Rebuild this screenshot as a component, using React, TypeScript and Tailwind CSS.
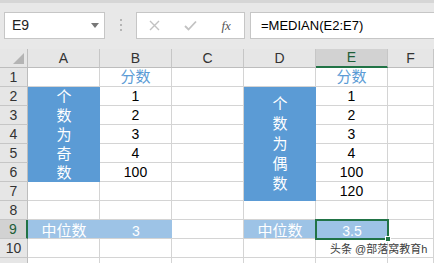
import React from 'react';

const COL = ['', 'col-start-1', 'col-start-2', 'col-start-3', 'col-start-4', 'col-start-5', 'col-start-6', 'col-start-7'];
const ROW = ['', 'row-start-1', 'row-start-2', 'row-start-3', 'row-start-4', 'row-start-5', 'row-start-6', 'row-start-7', 'row-start-8', 'row-start-9', 'row-start-10', 'row-start-11', 'row-start-12'];

const letters = ['A', 'B', 'C', 'D', 'E', 'F'];

const values: Record<string, string> = {
  B1: '分数', B2: '1', B3: '2', B4: '3', B5: '4', B6: '100',
  E1: '分数', E2: '1', E3: '2', E4: '3', E5: '4', E6: '100', E7: '120',
};

const Stack = ({ text, lh }: { text: string; lh: string }) => (
  <>
    {text.split('').map((ch, i) => (
      <span key={i} className={`text-[15px] ${lh}`}>{ch}</span>
    ))}
  </>
);

export default function App() {
  const cells: React.ReactNode[] = [];
  for (let r = 1; r <= 11; r++) {
    for (let c = 1; c <= 6; c++) {
      const key = letters[c - 1] + r;
      const v = values[key];
      const isHead = r === 1;
      cells.push(
        <div
          key={key}
          className={`${COL[c + 1]} ${ROW[r + 1]} border-r border-b border-[#d4d4d4] flex items-center justify-center ${isHead ? 'text-[15px] text-[#5b9bd5]' : 'text-[14px] text-black'}`}
        >
          {v}
        </div>
      );
    }
  }

  return (
    <div className="w-[434px] h-[263px] overflow-hidden bg-white relative font-['Liberation_Sans','Noto_Sans_CJK_SC',sans-serif]">
      {/* formula bar */}
      <div className="h-[49px] bg-[#e8e8e8] border-t-[3px] border-[#d6d6d6] flex items-start pt-[9px]">
        <div className="ml-[4px] w-[101px] h-[27px] bg-white border border-[#c6c6c6] flex items-center pl-[7px] text-[14px] text-[#222]">
          E9
          <svg className="ml-auto mr-[5px]" width="8" height="5" viewBox="0 0 8 5">
            <polygon points="0,0 8,0 4,5" fill="#777" />
          </svg>
        </div>
        <div className="ml-[15px] mt-[7px] flex flex-col gap-[3px]">
          <span className="w-[2px] h-[2px] bg-[#b5b5b5]" />
          <span className="w-[2px] h-[2px] bg-[#b5b5b5]" />
          <span className="w-[2px] h-[2px] bg-[#b5b5b5]" />
        </div>
        <div className="ml-[14px] w-[109px] h-[27px] bg-white border border-[#c6c6c6] flex items-center">
          <span className="w-[36px] flex justify-center">
            <svg width="11" height="11" viewBox="0 0 11 11">
              <path d="M1 1 L10 10 M10 1 L1 10" stroke="#c2c2c2" strokeWidth="1.4" />
            </svg>
          </span>
          <span className="w-[36px] flex justify-center">
            <svg width="13" height="11" viewBox="0 0 13 11">
              <path d="M1 6 L4.5 9.5 L12 1.5" stroke="#c2c2c2" strokeWidth="1.8" fill="none" />
            </svg>
          </span>
          <span className="w-[36px] flex justify-center text-[13px] italic text-[#555] font-['Liberation_Serif',serif]">fx</span>
        </div>
        <div className="ml-[5px] flex-1 h-[27px] bg-white border border-r-0 border-[#c6c6c6] flex items-center pl-[10px] text-[13px] text-black">
          =MEDIAN(E2:E7)
        </div>
      </div>

      {/* sheet */}
      <div className="grid grid-cols-[28px_72px_72px_72px_72px_72px_1fr] grid-rows-[repeat(12,19px)]">
        <div className="col-start-1 row-start-1 bg-[#e6e6e6] border-r border-b border-[#bdbdbd] flex items-end justify-end pr-[3px] pb-[3px]">
          <svg width="11" height="11" viewBox="0 0 11 11">
            <polygon points="11,0 11,11 0,11" fill="#b4b4b4" />
          </svg>
        </div>
        {letters.map((l, i) => (
          <div
            key={l}
            className={`${COL[i + 2]} row-start-1 flex items-center justify-center text-[14px] ${l === 'E' ? 'bg-[#d2d2d2] text-[#1e5e38] border-b-2 border-b-[#217346] border-r border-r-[#c6c6c6]' : 'bg-[#e6e6e6] text-[#333] border-r border-b border-[#c6c6c6] border-b-[#bdbdbd]'}`}
          >
            {l}
          </div>
        ))}
        {Array.from({ length: 11 }, (_, i) => i + 1).map((n) => (
          <div
            key={n}
            className={`col-start-1 ${ROW[n + 1]} flex items-center justify-center text-[14px] ${n === 9 ? 'bg-[#d2d2d2] text-[#1e5e38] border-r-2 border-r-[#217346] border-b border-b-[#c6c6c6]' : 'bg-[#e6e6e6] text-[#333] border-r border-b border-[#c6c6c6] border-r-[#bdbdbd]'}`}
          >
            {n < 11 ? n : ''}
          </div>
        ))}
        {cells}

        {/* merged blue blocks */}
        <div className="col-start-2 row-start-3 row-span-5 bg-[#5b9bd5] text-white flex flex-col items-center justify-center">
          <Stack text="个数为奇数" lh="leading-[19px]" />
        </div>
        <div className="col-start-5 row-start-3 row-span-6 bg-[#5b9bd5] text-white flex flex-col items-center justify-center">
          <Stack text="个数为偶数" lh="leading-[20px]" />
        </div>

        {/* median rows */}
        <div className="col-start-2 col-span-2 row-start-10 bg-[#9dc3e6] text-white grid grid-cols-2 border-b border-[#d4d4d4]">
          <span className="flex items-center justify-center text-[15px]">中位数</span>
          <span className="flex items-center justify-center text-[14px]">3</span>
        </div>
        <div className="col-start-5 col-span-2 row-start-10 bg-[#9dc3e6] text-white grid grid-cols-2 border-b border-[#d4d4d4]">
          <span className="flex items-center justify-center text-[15px]">中位数</span>
          <span className="flex items-center justify-center text-[14px]">3.5</span>
        </div>
        <div className="col-start-6 row-start-10 -m-px border-2 border-[#217346] relative">
          <span className="absolute -right-[4px] -bottom-[4px] w-[6px] h-[6px] bg-[#217346] border border-white" />
        </div>
      </div>

      <div className="absolute left-[330px] top-[241px] text-[11px] text-[#3c3c3c] [text-shadow:0_0_2px_white] whitespace-nowrap">
        头条 @部落窝教育h
      </div>
    </div>
  );
}
